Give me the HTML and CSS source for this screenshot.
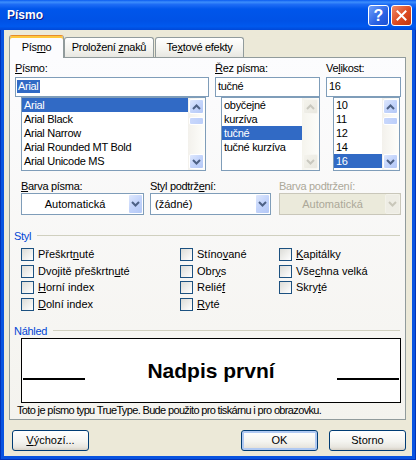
FILE: index.html
```html
<!DOCTYPE html>
<html lang="cs">
<head>
    <meta charset="UTF-8">
    <meta name="viewport" content="width=device-width, initial-scale=1.0">
    <title>Písmo</title>
    <link rel="stylesheet" href="styles.css">
</head>
<body>
    <div class="window">
        <div class="titlebar">
            <span class="title">Písmo</span>
            <div class="caption-buttons">
                <span class="caption-btn help">?</span>
                <span class="caption-btn close">
                    <svg width="11" height="11" viewBox="0 0 11 11"><path d="M1.5 1.5 L9.5 9.5 M9.5 1.5 L1.5 9.5" stroke="#fff" stroke-width="2" stroke-linecap="square"/></svg>
                </span>
            </div>
        </div>

        <div class="client">
            <div class="tabs">
                <div class="tab active">Pís<u>m</u>o</div>
                <div class="tab">Proložení <u>z</u>naků</div>
                <div class="tab">Te<u>x</u>tové efekty</div>
            </div>

            <div class="panel">
                <!-- font name / style / size -->
                <div class="font-row">
                    <div class="field col-name">
                        <label><u>P</u>ísmo:</label>
                        <div class="textbox"><span class="sel">Arial</span></div>
                        <div class="listbox">
                            <ul>
                                <li class="selected">Arial</li>
                                <li>Arial Black</li>
                                <li>Arial Narrow</li>
                                <li>Arial Rounded MT Bold</li>
                                <li>Arial Unicode MS</li>
                            </ul>
                            <div class="scrollbar">
                                <span class="sb-btn"><svg width="9" height="6" viewBox="0 0 9 6"><path d="M1 5 L4.5 1.5 L8 5" fill="none" stroke="currentColor" stroke-width="2"/></svg></span>
                                <span class="sb-thumb"></span>
                                <span class="sb-fill"></span>
                                <span class="sb-btn"><svg width="9" height="6" viewBox="0 0 9 6"><path d="M1 1 L4.5 4.5 L8 1" fill="none" stroke="currentColor" stroke-width="2"/></svg></span>
                            </div>
                        </div>
                    </div>

                    <div class="field col-style">
                        <label><u>Ř</u>ez písma:</label>
                        <div class="textbox">tučné</div>
                        <div class="listbox">
                            <ul>
                                <li>obyčejné</li>
                                <li>kurzíva</li>
                                <li class="selected">tučné</li>
                                <li>tučné kurzíva</li>
                            </ul>
                            <div class="scrollbar disabled">
                                <span class="sb-btn"><svg width="9" height="6" viewBox="0 0 9 6"><path d="M1 5 L4.5 1.5 L8 5" fill="none" stroke="currentColor" stroke-width="2"/></svg></span>
                                <span class="sb-fill"></span>
                                <span class="sb-btn"><svg width="9" height="6" viewBox="0 0 9 6"><path d="M1 1 L4.5 4.5 L8 1" fill="none" stroke="currentColor" stroke-width="2"/></svg></span>
                            </div>
                        </div>
                    </div>

                    <div class="field col-size">
                        <label>Ve<u>l</u>ikost:</label>
                        <div class="textbox">16</div>
                        <div class="listbox">
                            <ul>
                                <li>10</li>
                                <li>11</li>
                                <li>12</li>
                                <li>14</li>
                                <li class="selected">16</li>
                            </ul>
                            <div class="scrollbar">
                                <span class="sb-btn"><svg width="9" height="6" viewBox="0 0 9 6"><path d="M1 5 L4.5 1.5 L8 5" fill="none" stroke="currentColor" stroke-width="2"/></svg></span>
                                <span class="sb-thumb"></span>
                                <span class="sb-fill"></span>
                                <span class="sb-btn"><svg width="9" height="6" viewBox="0 0 9 6"><path d="M1 1 L4.5 4.5 L8 1" fill="none" stroke="currentColor" stroke-width="2"/></svg></span>
                            </div>
                        </div>
                    </div>
                </div>

                <!-- colour and underline -->
                <div class="combo-row">
                    <div class="field combo-color">
                        <label><u>B</u>arva písma:</label>
                        <div class="combo centered">
                            <span class="combo-text">Automatická</span>
                            <span class="combo-btn"><svg width="9" height="6" viewBox="0 0 9 6"><path d="M1 1 L4.5 4.5 L8 1" fill="none" stroke="currentColor" stroke-width="2"/></svg></span>
                        </div>
                    </div>
                    <div class="field combo-underline">
                        <label>Styl podtrž<u>e</u>ní:</label>
                        <div class="combo">
                            <span class="combo-text">(žádné)</span>
                            <span class="combo-btn"><svg width="9" height="6" viewBox="0 0 9 6"><path d="M1 1 L4.5 4.5 L8 1" fill="none" stroke="currentColor" stroke-width="2"/></svg></span>
                        </div>
                    </div>
                    <div class="field combo-ucolor disabled">
                        <label>Barva podtržení:</label>
                        <div class="combo centered">
                            <span class="combo-text">Automatická</span>
                            <span class="combo-btn"><svg width="9" height="6" viewBox="0 0 9 6"><path d="M1 1 L4.5 4.5 L8 1" fill="none" stroke="currentColor" stroke-width="2"/></svg></span>
                        </div>
                    </div>
                </div>

                <!-- effects -->
                <div class="group-title styl-title"><span>Styl</span><span class="rule"></span></div>
                <div class="checks">
                    <div class="check"><span class="box"></span><span>Přeškrt<u>n</u>uté</span></div>
                    <div class="check"><span class="box"></span><span>Dvojitě přeškrtn<u>u</u>té</span></div>
                    <div class="check"><span class="box"></span><span><u>H</u>orní index</span></div>
                    <div class="check"><span class="box"></span><span><u>D</u>olní index</span></div>
                    <div class="check"><span class="box"></span><span>Stíno<u>v</u>ané</span></div>
                    <div class="check"><span class="box"></span><span>Obr<u>y</u>s</span></div>
                    <div class="check"><span class="box"></span><span>Relié<u>f</u></span></div>
                    <div class="check"><span class="box"></span><span><u>R</u>yté</span></div>
                    <div class="check"><span class="box"></span><span><u>K</u>apitálky</span></div>
                    <div class="check"><span class="box"></span><span>Vše<u>c</u>hna velká</span></div>
                    <div class="check"><span class="box"></span><span>Skry<u>t</u>é</span></div>
                </div>

                <!-- preview -->
                <div class="group-title preview-title"><span>Náhled</span><span class="rule"></span></div>
                <div class="preview">
                    <span class="preview-line"></span>
                    <span class="preview-text">Nadpis první</span>
                    <span class="preview-line"></span>
                </div>
                <p class="note">Toto je písmo typu TrueType. Bude použito pro tiskárnu i pro obrazovku.</p>
            </div>

            <div class="button-row">
                <button class="btn"><u>V</u>ýchozí...</button>
                <span class="spacer"></span>
                <button class="btn default">OK</button>
                <button class="btn cancel">Storno</button>
            </div>
        </div>
    </div>
</body>
</html>
```

FILE: styles.css
```css
body {
    margin: 0;
    font-family: "Liberation Sans", Arial, sans-serif;
    font-size: 11px;
    line-height: 13px;
    letter-spacing: -0.3px;
    color: #000;
    background: #fff;
}
u {
    text-underline-offset: 1px;
}

/* window frame */
.window {
    width: 416px;
    height: 460px;
    box-sizing: border-box;
    display: flex;
    flex-direction: column;
    background: #0853e0;
    box-shadow: inset 1px 0 #0032b8, inset -1px 0 #0032b8, inset 0 -1px #0032b8;
}
.titlebar {
    height: 30px;
    flex: none;
    display: flex;
    align-items: center;
    padding: 0 4px 0 7px;
    background: linear-gradient(#0a5bf0 0%, #3d8efc 7%, #1d6cf5 15%, #0056eb 30%, #0052e6 70%, #0059ee 88%, #0048d8 100%);
}
.title {
    flex: 1;
    color: #fff;
    font-weight: bold;
    font-size: 12px;
    letter-spacing: 0;
    text-shadow: 1px 1px #0a1883;
}
.caption-buttons {
    display: flex;
    gap: 2px;
}
.caption-btn {
    width: 21px;
    height: 21px;
    box-sizing: border-box;
    border: 1px solid #fff;
    border-radius: 3px;
    display: flex;
    align-items: center;
    justify-content: center;
}
.help {
    background: linear-gradient(135deg, #6f9ff9, #2a62e4 60%, #1b50d4);
    color: #fff;
    font-weight: bold;
    font-size: 16px;
    letter-spacing: 0;
}
.close {
    background: linear-gradient(135deg, #f08b6a, #dd4a20 55%, #c23610);
}

/* dialog client area */
.client {
    flex: 1;
    margin: 0 4px 4px;
    padding-top: 5px;
    background: #ece9d8;
}
.tabs {
    display: flex;
    align-items: flex-end;
    height: 22px;
    padding-left: 5px;
}
.tab {
    height: 20px;
    box-sizing: border-box;
    padding-top: 3px;
    text-align: center;
    border: 1px solid #919b9c;
    border-bottom: none;
    border-radius: 3px 3px 0 0;
    background: linear-gradient(#fff, #f3f3ef 60%, #e8e7e1);
}
.tab:nth-child(1) { width: 55px; }
.tab:nth-child(2) { width: 90px; }
.tab:nth-child(3) { width: 89px; margin-left: 1px; }
.tab.active {
    height: 23px;
    margin-bottom: -1px;
    padding-top: 5px;
    position: relative;
    z-index: 1;
    border-top: 1px solid #e68b2c;
    box-shadow: inset 0 2px #ffc83c;
    background: #fcfcfe;
}
.panel {
    margin: 0 6px 0 5px;
    height: 363px;
    box-sizing: border-box;
    border: 1px solid #919b9c;
    background: linear-gradient(#fcfcfe, #f4f3ee);
}

/* font lists */
.field label {
    display: block;
    height: 13px;
}
.font-row {
    display: flex;
    margin-top: 4px;
    padding-left: 5px;
}
.font-row label {
    margin-bottom: 2px;
}
.col-name { width: 194px; }
.col-style { width: 105px; margin-left: 6px; }
.col-size { width: 75px; margin-left: 6px; }
.textbox {
    height: 20px;
    box-sizing: border-box;
    border: 1px solid #7f9db9;
    background: #fff;
    padding: 2px 0 0 2px;
}
.col-name .textbox { padding-left: 1px; }
.sel {
    display: inline-block;
    padding: 0 1px;
    background: #316ac5;
    color: #fff;
}
.listbox {
    display: flex;
    height: 74px;
    box-sizing: border-box;
    margin-left: 6px;
    border: 1px solid #7f9db9;
    background: #fff;
}
.col-name .listbox { width: 185px; }
.col-style .listbox { width: 99px; }
.col-size .listbox { width: 67px; margin-left: 7px; }
.listbox ul {
    flex: 1;
    margin: 0;
    padding: 0;
    list-style: none;
}
.listbox li {
    height: 14px;
    line-height: 14px;
    padding-left: 2px;
    white-space: nowrap;
}
.listbox li.selected {
    background: #316ac5;
    color: #fff;
}
.scrollbar {
    width: 17px;
    display: flex;
    flex-direction: column;
    align-items: center;
    background: linear-gradient(to right, #f3f1ec, #fefefb);
    color: #4d6185;
}
.sb-btn {
    width: 15px;
    height: 15px;
    margin: 1px 0;
    box-sizing: border-box;
    border: 1px solid #fff;
    border-radius: 2px;
    display: flex;
    align-items: center;
    justify-content: center;
    background: linear-gradient(135deg, #dfe8fd, #c3d4fb 50%, #b4c8f6);
}
.sb-thumb {
    width: 15px;
    height: 8px;
    margin-top: 2px;
    box-sizing: border-box;
    border: 1px solid #fff;
    border-radius: 2px;
    background: linear-gradient(to right, #c8d7fc, #bccffa);
}
.sb-fill {
    flex: 1;
}
.scrollbar.disabled {
    color: #c9c8bf;
    background: linear-gradient(to right, #f5f4ed, #fdfdfa);
}
.scrollbar.disabled .sb-btn {
    border-color: #f7f6f1;
    background: linear-gradient(135deg, #f4f3ec, #e9e8e0);
}

/* colour / underline combos */
.combo-row {
    display: flex;
    margin-top: 9px;
    padding-left: 11px;
}
.combo-color { width: 123px; }
.combo-underline { width: 121px; margin-left: 6px; }
.combo-ucolor { width: 122px; margin-left: 8px; }
.combo {
    display: flex;
    align-items: center;
    height: 22px;
    box-sizing: border-box;
    border: 1px solid #7f9db9;
    background: #fff;
    letter-spacing: 0;
}
.combo-text {
    flex: 1;
    padding-left: 4px;
}
.combo.centered .combo-text {
    padding-left: 0;
    text-align: center;
}
.combo-btn {
    width: 15px;
    height: 20px;
    box-sizing: border-box;
    border: 1px solid #fff;
    border-radius: 2px;
    display: flex;
    align-items: center;
    justify-content: center;
    color: #4d6185;
    background: linear-gradient(135deg, #dfe8fd, #c3d4fb 50%, #b4c8f6);
}
.disabled label,
.disabled .combo-text {
    color: #aca899;
}
.disabled .combo {
    border-color: #c9c7ba;
    background: #ebeadb;
}
.disabled .combo-btn {
    color: #c9c7ba;
    border-color: #f3f2ea;
    background: #eeede5;
}

/* group headings */
.group-title {
    display: flex;
    align-items: center;
    height: 13px;
    padding: 0 5px 0 4px;
    color: #0046d5;
}
.group-title .rule {
    flex: 1;
    height: 1px;
    margin: 0 0 2px 6px;
    background: #d0d0bf;
}
.styl-title { margin-top: 15px; }
.preview-title { margin-top: 11px; }

.checks {
    display: grid;
    grid-auto-flow: column;
    grid-template-columns: 159px 99px 1fr;
    grid-template-rows: repeat(4, 16.5px);
    margin-top: 5px;
    padding-left: 11px;
    letter-spacing: 0;
}
.check {
    display: flex;
    align-items: flex-start;
    gap: 4px;
}
.box {
    width: 13px;
    height: 13px;
    box-sizing: border-box;
    border: 1px solid #1c5180;
    background: linear-gradient(135deg, #dcdcd7, #fff);
}

/* preview */
.preview {
    display: flex;
    align-items: flex-end;
    justify-content: space-between;
    height: 65px;
    box-sizing: border-box;
    margin: 0 4px 0 11px;
    padding: 0 1px;
    border: 1px solid #000;
    background: #fff;
}
.preview-line {
    width: 62px;
    height: 2px;
    margin-bottom: 22px;
    background: #000;
}
.preview-text {
    align-self: center;
    font-weight: bold;
    font-size: 21px;
    line-height: 24px;
    letter-spacing: 0;
}
.note {
    margin: 1px 0 0 7px;
    letter-spacing: -0.65px;
}

/* buttons */
.button-row {
    display: flex;
    margin-top: 10px;
    padding: 0 6px 0 8px;
}
.spacer {
    flex: 1;
}
.btn {
    width: 77px;
    height: 21px;
    padding: 0;
    box-sizing: border-box;
    font: inherit;
    letter-spacing: 0;
    color: #000;
    border: 1px solid #003c74;
    border-radius: 3px;
    background: linear-gradient(#fff, #f4f4f0 55%, #e8e6df 85%, #d6d0c5);
}
.btn.default {
    box-shadow: inset 0 0 0 2px #b0c9f2;
}
.btn.cancel {
    margin-left: 11px;
}
```
